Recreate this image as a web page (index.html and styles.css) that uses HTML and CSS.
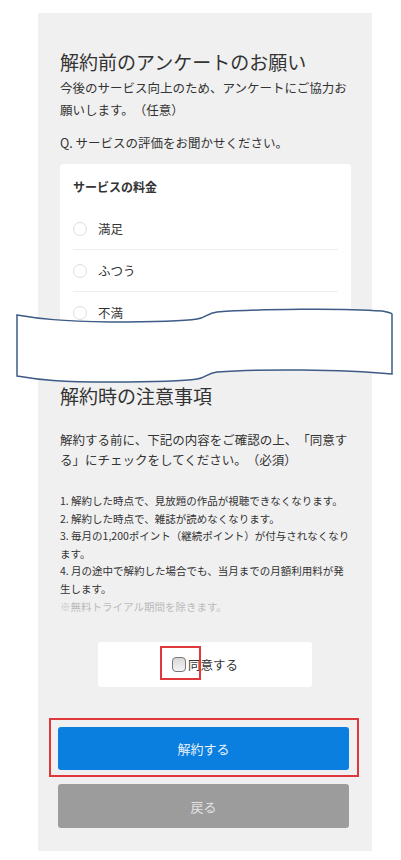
FILE: index.html
```html
<!DOCTYPE html>
<html lang="ja">
<head>
	<meta charset="UTF-8">
	<title>解約手続き</title>
	<link rel="stylesheet" href="styles.css">
</head>
<body>
	<div class="panel">
		<div class="intro">
			<h2 class="title">解約前のアンケートのお願い</h2>
			<p class="lead">今後のサービス向上のため、アンケートにご協力お願いします。（任意）</p>
			<p class="question">Q. サービスの評価をお聞かせください。</p>
		</div>
		<div class="card">
			<p class="card-title">サービスの料金</p>
			<label class="option"><span class="radio"></span>満足</label>
			<label class="option"><span class="radio"></span>ふつう</label>
			<label class="option"><span class="radio"></span>不満</label>
		</div>

		<div class="notice">
			<h2 class="title">解約時の注意事項</h2>
			<p class="notice-lead">解約する前に、下記の内容をご確認の上、「同意する」にチェックをしてください。（必須）</p>
			<ul class="rules">
				<li>1. 解約した時点で、見放題の作品が視聴できなくなります。</li>
				<li>2. 解約した時点で、雑誌が読めなくなります。</li>
				<li>3. 毎月の1,200ポイント（継続ポイント）が付与されなくなります。</li>
				<li>4. 月の途中で解約した場合でも、当月までの月額利用料が発生します。</li>
				<li class="note">※無料トライアル期間を除きます。</li>
			</ul>
		</div>

		<div class="agree">
			<label class="agree-label">
				<span class="mark"></span>
				<input type="checkbox" class="check">同意する
			</label>
		</div>

		<div class="cancel-wrap">
			<button class="btn btn-cancel">解約する</button>
		</div>
		<button class="btn btn-back">戻る</button>
	</div>

	<!-- 破れた紙のバナー -->
	<svg class="banner" width="401" height="95" viewBox="0 0 401 95">
		<path d="M17,15 C40,19 60,21 110,22 C150,22 185,21 197,19 C206,18 207,13 217,12 C260,9 340,8 382,11 C388,12 391,13 392,14 L392,74 C340,69 260,69 217,72 C207,73 206,78 197,79 C185,81 150,82 110,82 C60,82 40,80 17,76 Z" fill="#fff" stroke="#3d5b86" stroke-width="1.5"/>
	</svg>
</body>
</html>
```

FILE: styles.css
```css
body{
	margin:0;
	padding:13px 29px 9px 38px;
	font-family:"Noto Sans CJK JP","Noto Sans",sans-serif;
	color:#333;
	position:relative;
	text-spacing-trim:space-all;
}
.panel{
	background:#f0f0f0;
	padding:35px 20px 23px;
}
.intro,.notice{
	padding:0 2px;
}
.title{
	margin:0;
	font-size:19px;
	line-height:28px;
	font-weight:normal;
}
.lead{
	margin:1px 0 0;
	font-size:12.5px;
	line-height:22px;
}
.question{
	margin:11px 0 0;
	font-size:12.5px;
	line-height:22px;
}
.card{
	background:#fff;
	border-radius:4px;
	margin:10px 1px 0 2px;
	padding:13px 13px 6px;
}
.card-title{
	margin:0 0 11px;
	font-size:12px;
	font-weight:bold;
	line-height:20px;
}
.option{
	display:flex;
	align-items:center;
	gap:11px;
	height:41px;
	font-size:12.5px;
	border-bottom:1px solid #eee;
}
.option:last-child{
	border-bottom:none;
}
.radio{
	width:12px;
	height:12px;
	border:1px solid #ddd;
	border-radius:50%;
}
.notice{
	margin-top:43px;
}
.notice-lead{
	margin:20px 0 0;
	font-size:12.5px;
	line-height:20px;
}
.rules{
	list-style:none;
	margin:22px 0 0;
	padding:0;
	font-size:10.5px;
	line-height:17.6px;
}
.rules .note{
	color:#bbb;
}
.agree{
	background:#fff;
	width:214px;
	height:45px;
	margin:27px auto 0;
	display:flex;
	align-items:center;
	justify-content:center;
	border-radius:3px;
}
.agree-label{
	position:relative;
	display:flex;
	align-items:center;
	font-size:12.5px;
	line-height:18px;
}
.check{
	appearance:none;
	-webkit-appearance:none;
	width:14px;
	height:15px;
	margin:0 2px 0 0;
	border:1px solid #777;
	border-radius:4px;
	background:linear-gradient(#d8d8d8,#f4f4f4);
	box-sizing:border-box;
}
.mark{
	position:absolute;
	left:-12px;
	top:-10px;
	width:41px;
	height:34px;
	border:2px solid #e0383a;
	box-sizing:border-box;
}
.cancel-wrap{
	margin:31px -7px 0 -9px;
	padding:7px 8px 5px 7px;
	border:2px solid #e0383a;
}
.btn{
	display:block;
	width:291px;
	border:none;
	border-radius:3px;
	font-family:inherit;
	font-size:13px;
	padding:0;
}
.btn-cancel{
	height:43px;
	background:#0a7fdf;
	color:#eaf3fc;
}
.btn-back{
	height:44px;
	margin-top:7px;
	background:#9c9c9c;
	color:#e2e2e2;
}
.banner{
	position:absolute;
	left:0;
	top:300px;
}
```
